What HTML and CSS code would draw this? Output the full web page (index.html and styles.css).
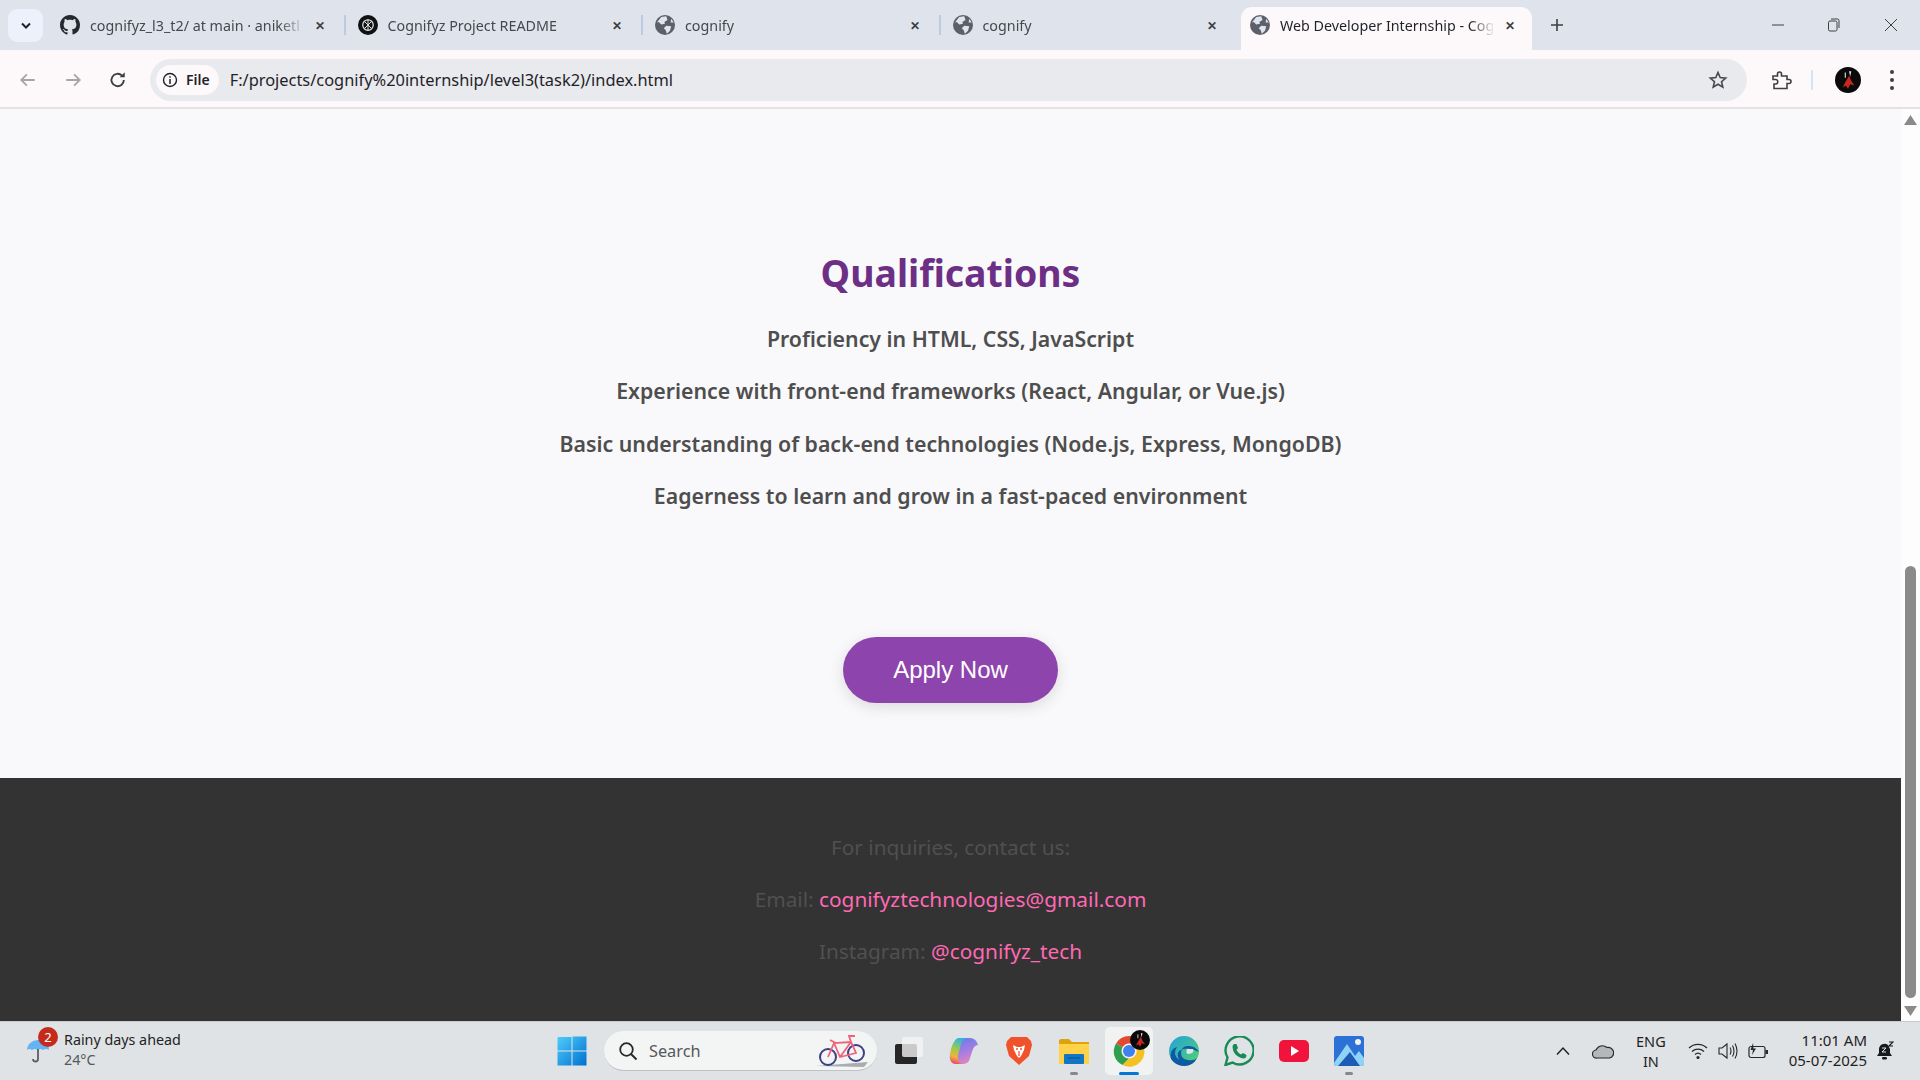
FILE: index.html
```html
<!DOCTYPE html>
<html>
<head>
  <title>Web Developer Internship - Cognifyz</title>
  <link rel="stylesheet" href="styles.css">
</head>
<body>
  <svg class="defs" width="0" height="0">
    <symbol id="globe" viewBox="0 0 16 16">
      <circle cx="8" cy="8" r="8" fill="#5c6068"/>
      <path d="M5 1.5 L9 1 L10 4 L7.5 5.5 L8 7 L5 7.5 L3 5.5 L1.5 6 Z M9 8.5 L13 9 L12 12.5 L9.5 15 L8.5 12 L7 10.5 Z M13 3 L15 6 L12.5 6 Z" fill="#e0e4ee"/>
    </symbol>
    <symbol id="avatar" viewBox="0 0 24 24">
      <circle cx="12" cy="12" r="12" fill="#0a0a0a"/>
      <path d="M9 15 L13 8 L15 13 L18 17 L14 16 L12 20 L10 17 L7 19 Z" fill="#c8281e"/>
      <path d="M9 5 L10 5 L10 10 L9 10 Z M13 4 L15 4 L14 9 Z" fill="#e8e8e8"/>
    </symbol>
  </svg>

  <div class="tabbar">
    <button class="tab-search">
      <svg width="12" height="8" viewBox="0 0 12 8"><path d="M2 1.5 L6 5.5 L10 1.5" fill="none" stroke="#1f2329" stroke-width="2"/></svg>
    </button>

    <div class="tab">
      <svg class="favicon" viewBox="0 0 16 16"><path fill="#24292f" d="M8 0C3.58 0 0 3.58 0 8c0 3.54 2.29 6.53 5.47 7.59.4.07.55-.17.55-.38 0-.19-.01-.82-.01-1.49-2.01.37-2.53-.49-2.69-.94-.09-.23-.48-.94-.82-1.13-.28-.15-.68-.52-.01-.53.63-.01 1.08.58 1.23.82.72 1.21 1.87.87 2.33.66.07-.52.28-.87.51-1.07-1.78-.2-3.64-.89-3.64-3.95 0-.87.31-1.59.82-2.15-.08-.2-.36-1.02.08-2.12 0 0 .67-.21 2.2.82.64-.18 1.32-.27 2-.27s1.36.09 2 .27c1.53-1.04 2.2-.82 2.2-.82.44 1.1.16 1.92.08 2.12.51.56.82 1.27.82 2.15 0 3.07-1.87 3.75-3.65 3.95.29.25.54.73.54 1.48 0 1.07-.01 1.93-.01 2.2 0 .21.15.46.55.38A8.01 8.01 0 0 0 16 8c0-4.42-3.58-8-8-8z"/></svg>
      <span class="tab-title">cognifyz_l3_t2/ at main · aniketl</span>
      <span class="tab-close">&#10005;</span>
    </div>
    <i class="tab-sep"></i>
    <div class="tab">
      <svg class="favicon" viewBox="0 0 16 16"><circle cx="8" cy="8" r="8" fill="#111"/><circle cx="8" cy="8" r="4.2" fill="none" stroke="#ddd" stroke-width="1"/><path d="M5 5 L11 11 M11 5 L5 11 M8 3.5 L8 12.5" stroke="#ddd" stroke-width=".8"/></svg>
      <span class="tab-title">Cognifyz Project README</span>
      <span class="tab-close">&#10005;</span>
    </div>
    <i class="tab-sep"></i>
    <div class="tab">
      <svg class="favicon"><use href="#globe"/></svg>
      <span class="tab-title">cognify</span>
      <span class="tab-close">&#10005;</span>
    </div>
    <i class="tab-sep"></i>
    <div class="tab">
      <svg class="favicon"><use href="#globe"/></svg>
      <span class="tab-title">cognify</span>
      <span class="tab-close">&#10005;</span>
    </div>
    <div class="tab tab-active">
      <svg class="favicon"><use href="#globe"/></svg>
      <span class="tab-title">Web Developer Internship - Cog</span>
      <span class="tab-close">&#10005;</span>
    </div>
    <svg class="new-tab" width="16" height="16" viewBox="0 0 16 16"><path d="M8 2 V14 M2 8 H14" stroke="#3c4043" stroke-width="1.6"/></svg>

    <div class="win-controls">
      <svg width="12" height="12" viewBox="0 0 12 12"><path d="M0 6 H12" stroke="#3c4043" stroke-width="1"/></svg>
      <svg width="12" height="14" viewBox="0 0 12 14"><rect x=".5" y="3" width="8.5" height="10" rx="1.5" fill="none" stroke="#3c4043"/><path d="M3 1 H9.5 Q11 1 11 2.5 V10" fill="none" stroke="#3c4043"/></svg>
      <svg width="14" height="14" viewBox="0 0 14 14"><path d="M1 1 L13 13 M13 1 L1 13" stroke="#3c4043" stroke-width="1"/></svg>
    </div>
  </div>

  <div class="toolbar">
    <svg class="nav-icon" viewBox="0 0 16 16"><path d="M14 8 H2 M7 3 L2 8 L7 13" fill="none" stroke="#a4a6aa" stroke-width="1.6"/></svg>
    <svg class="nav-icon" viewBox="0 0 16 16"><path d="M2 8 H14 M9 3 L14 8 L9 13" fill="none" stroke="#a4a6aa" stroke-width="1.6"/></svg>
    <svg class="nav-icon" viewBox="0 0 16 16"><path d="M13.2 8 A5.5 5.5 0 1 1 11.6 4.1" fill="none" stroke="#3c4043" stroke-width="1.7"/><path d="M9.5 5.5 H14 V1 Z" fill="#3c4043"/></svg>

    <div class="omnibox">
      <div class="chip">
        <svg width="16" height="16" viewBox="0 0 16 16"><circle cx="8" cy="8" r="6.5" fill="none" stroke="#1f2329" stroke-width="1.4"/><path d="M8 7 V12 M8 4.2 V5.8" stroke="#1f2329" stroke-width="1.5"/></svg>
        <span>File</span>
      </div>
      <span class="url">F:/projects/cognify%20internship/level3(task2)/index.html</span>
      <svg class="star" width="20" height="20" viewBox="0 0 20 20"><path d="M10 2.5 L12.2 7.6 L17.7 8.1 L13.5 11.7 L14.8 17.1 L10 14.2 L5.2 17.1 L6.5 11.7 L2.3 8.1 L7.8 7.6 Z" fill="none" stroke="#45484d" stroke-width="1.6"/></svg>
    </div>

    <svg class="ext" width="22" height="22" viewBox="0 0 22 22"><path d="M3 7 H7.5 V5 A2 2 0 0 1 11.5 5 V7 H17 V10.5 H19 A2 2 0 0 1 19 14.5 H17 V19.5 H4 V15 H6 A2.3 2.3 0 0 0 6 10.5 H3 Z" fill="none" stroke="#3c4043" stroke-width="1.6"/></svg>
    <i class="toolbar-sep"></i>
    <svg class="profile" width="26" height="26"><use href="#avatar"/></svg>
    <div class="menu-dots"><i></i><i></i><i></i></div>
  </div>

  <div class="viewport">
    <div class="page">
      <main class="content">
        <section class="qualifications">
          <h2>Qualifications</h2>
          <p>Proficiency in HTML, CSS, JavaScript</p>
          <p>Experience with front-end frameworks (React, Angular, or Vue.js)</p>
          <p>Basic understanding of back-end technologies (Node.js, Express, MongoDB)</p>
          <p>Eagerness to learn and grow in a fast-paced environment</p>
        </section>
        <a class="apply-btn" href="#">Apply Now</a>
      </main>
      <footer class="contact">
        <p>For inquiries, contact us:</p>
        <p>Email: <a href="#">cognifyztechnologies@gmail.com</a></p>
        <p>Instagram: <a href="#">@cognifyz_tech</a></p>
      </footer>
    </div>
    <div class="scrollbar">
      <svg width="13" height="10" viewBox="0 0 13 10"><path d="M6.5 0 L13 10 H0 Z" fill="#8a8a8a"/></svg>
      <div class="scroll-track"><div class="scroll-thumb"></div></div>
      <svg width="13" height="10" viewBox="0 0 13 10"><path d="M0 0 H13 L6.5 10 Z" fill="#8a8a8a"/></svg>
    </div>
  </div>

  <div class="taskbar">
    <div class="weather">
      <div class="weather-icon">
        <svg width="24" height="28" viewBox="0 0 24 28"><path d="M1 15 A11 10 0 0 1 23 15 Q20 13 17 15 Q14 13 12 15 Q9 13 6 15 Q3 13 1 15 Z" fill="#62b4f3"/><path d="M12 14 V24 A2.5 2.5 0 0 1 7 24" fill="none" stroke="#5a5f63" stroke-width="1.8"/></svg>
        <span class="weather-badge">2</span>
      </div>
      <div class="weather-text">
        <span>Rainy days ahead</span>
        <span class="muted">24°C</span>
      </div>
    </div>

    <div class="task-center">
      <svg class="win-logo" width="30" height="30" viewBox="0 0 30 30">
        <defs><linearGradient id="winGrad" x1="0" y1="0" x2="1" y2="1"><stop offset="0" stop-color="#4fcdfb"/><stop offset="1" stop-color="#0070d0"/></linearGradient></defs>
        <path d="M1 1 H14.5 V14.5 H0.5 V2 Z M15.5 .5 H29.5 V14.5 H15.5 Z M.5 15.5 H14.5 V29.5 H.5 Z M15.5 15.5 H29.5 V29.5 H15.5 Z" fill="url(#winGrad)"/>
      </svg>

      <div class="search-box">
        <svg width="20" height="20" viewBox="0 0 20 20"><circle cx="8.5" cy="8.5" r="6.3" fill="none" stroke="#26292c" stroke-width="1.8"/><path d="M13 13 L18.5 18.5" stroke="#26292c" stroke-width="2"/></svg>
        <span>Search</span>
        <svg class="bike" width="54" height="32" viewBox="0 0 54 32">
          <path d="M0 31 L52 27 L48 32 Z" fill="#a9adb0"/>
          <circle cx="12" cy="22" r="8" fill="#f2f5f5" stroke="#3f3f85" stroke-width="2"/>
          <circle cx="40" cy="18" r="8" fill="#f2f5f5" stroke="#3f3f85" stroke-width="2"/>
          <path d="M12 22 L18 8 L35 7 L40 18 L24 22 L18 8 M24 22 L35 7 M14 5 L20 8 M35 7 L33 1 L39 1" fill="none" stroke="#f0627a" stroke-width="1.8"/>
        </svg>
      </div>

      <div class="task-icon">
        <svg width="30" height="30" viewBox="0 0 30 30"><rect x="1" y="8" width="22" height="20" rx="2" fill="#262626"/><rect x="8" y="1" width="21" height="20" rx="2" fill="#f4f4f4" fill-opacity=".8"/></svg>
      </div>
      <div class="task-icon">
        <svg width="30" height="30" viewBox="0 0 30 30">
          <defs>
            <linearGradient id="copilotLeft" x1="0.6" y1="0" x2="0.4" y2="1"><stop offset="0" stop-color="#2ab4e8"/><stop offset=".45" stop-color="#9ccc4c"/><stop offset=".75" stop-color="#f2b23c"/><stop offset="1" stop-color="#e4506a"/></linearGradient>
            <linearGradient id="copilotRight" x1="0.3" y1="0" x2="0.7" y2="1"><stop offset="0" stop-color="#5f7fe8"/><stop offset=".6" stop-color="#b07de0"/><stop offset="1" stop-color="#e88ab0"/></linearGradient>
          </defs>
          <path d="M21 2 H14 Q10 2 9 6 L6 15 Q5 18 2 18 H1 Q0 22 2 25 Q4 28 7 28 H15 Q18 28 20 25 L24 13 Q26 9 29 9 Q27 2 21 2 Z" fill="url(#copilotRight)"/>
          <path d="M10 2 H17 Q13 3 12 8 L9 19 Q8 26 13 28 H6 Q1 27 1 21 Q1 12 5 6 Q7 2 10 2 Z" fill="url(#copilotLeft)"/>
        </svg>
      </div>
      <div class="task-icon">
        <svg width="28" height="30" viewBox="0 0 28 30"><path d="M6 1 H22 L26 5 L27 9 L24 20 L14 29 L4 20 L1 9 L2 5 Z" fill="#f0532b"/><path d="M8 9 L12 11 H16 L20 9 L19 14 L16 20 L14 22 L12 20 L9 14 Z" fill="#fff"/><path d="M11 13 H13 M15 13 H17 M14 15 V20" stroke="#f0532b" stroke-width="1.3"/></svg>
      </div>
      <div class="task-icon running">
        <svg width="30" height="26" viewBox="0 0 30 26"><path d="M0 3 Q0 1 2 1 H10 L13 4 H30 V26 H0 Z" fill="#dba40f"/><rect y="6" width="30" height="20" fill="#ffd24a"/><rect x="5" y="16" width="20" height="10" rx="1" fill="#1276c4"/><path d="M9 20 H21" stroke="#0a4f8a" stroke-width="1"/></svg>
      </div>
      <div class="task-icon active">
        <svg class="chrome" width="32" height="32" viewBox="0 0 32 32">
          <path d="M16 1 A15 15 0 0 1 29 8.5 H16 A7.5 7.5 0 0 0 9.5 12.3 L3 8.5 A15 15 0 0 1 16 1 Z" fill="#e2492f"/>
          <path d="M3 8.5 L9.5 12.3 A7.5 7.5 0 0 0 16 23.5 L9.5 30 A15 15 0 0 1 3 8.5 Z" fill="#2f9e4e"/>
          <path d="M29 8.5 A15 15 0 0 1 9.5 30 L16 23.5 A7.5 7.5 0 0 0 22.5 12 Z" fill="#f4c022"/>
          <circle cx="16" cy="16" r="6" fill="#3f82ee"/>
        </svg>
        <svg class="chrome-badge" width="20" height="20"><use href="#avatar"/></svg>
      </div>
      <div class="task-icon">
        <svg width="30" height="30" viewBox="0 0 30 30">
          <defs><linearGradient id="edgeGrad" x1="0" y1="0" x2="1" y2="1"><stop offset="0" stop-color="#22a0dc"/><stop offset="1" stop-color="#55d46c"/></linearGradient></defs>
          <circle cx="15" cy="15" r="15" fill="url(#edgeGrad)"/>
          <path d="M30 16 Q26 9 18 10 Q12 11 12 17 Q12 23 19 24 Q25 25 28 22 Q24 30 15 30 Q7 30 2 23 Q0 13 8 11 Q3 18 10 24 Q6 15 14 13 Q22 11 30 16 Z" fill="#0c59a4"/>
          <path d="M18 13 H24 Q26 17 20 18 Q16 18 18 13 Z" fill="#e2e5e5"/>
        </svg>
      </div>
      <div class="task-icon">
        <svg width="30" height="30" viewBox="0 0 30 30"><path d="M1.5 29 L3.5 21.5 A14 14 0 1 1 8.5 26.5 Z" fill="none" stroke="#178a55" stroke-width="2.4"/><path d="M10 8 L12.5 8 L14 12 L12.5 14 Q14.5 17.5 17 18.5 L19 17 L22.5 19 L22 21.5 Q20 23 17 22 Q9 19 8.5 11 Q8.5 9 10 8 Z" fill="#178a55"/></svg>
      </div>
      <div class="task-icon">
        <svg width="30" height="22" viewBox="0 0 30 22"><rect width="30" height="22" rx="5" fill="#f0143c"/><path d="M12 6 L20 11 L12 16 Z" fill="#fff"/></svg>
      </div>
      <div class="task-icon running">
        <svg width="30" height="30" viewBox="0 0 30 30">
          <rect width="30" height="30" rx="3" fill="#2b71d6"/>
          <path d="M0 27 L13 8 L21 20 L25 15 L30 22 V27 Q30 30 27 30 H3 Q0 30 0 27 Z" fill="#8fd3f7"/>
          <path d="M4 30 L16 16 L26 30 Z" fill="#1e5bb5"/>
          <circle cx="24" cy="6" r="3" fill="#f2f2f2"/>
        </svg>
      </div>
    </div>

    <div class="tray">
      <svg width="16" height="10" viewBox="0 0 16 10"><path d="M2 8.5 L8 2 L14 8.5" fill="none" stroke="#1f2224" stroke-width="1.5"/></svg>
      <svg class="cloud" width="22" height="16" viewBox="0 0 22 16"><path d="M5 15 A4 4 0 0 1 4 7 A7 7 0 0 1 15 4.5 A5 5 0 0 1 17.5 15 Z" fill="#b5b8ba" stroke="#26292b" stroke-width="1.2"/></svg>
      <div class="lang"><span>ENG</span><span>IN</span></div>
      <div class="tray-group">
        <svg width="20" height="18" viewBox="0 0 20 18"><path d="M1 6 A13 13 0 0 1 19 6 M4 9.5 A9 9 0 0 1 16 9.5 M7 12.5 A4.5 4.5 0 0 1 13 12.5" fill="none" stroke="#26292b" stroke-width="1.3"/><circle cx="10" cy="15.5" r="1.6" fill="#26292b"/></svg>
        <svg width="20" height="18" viewBox="0 0 20 18"><path d="M1 6 H4 L9 2 V16 L4 12 H1 Z" fill="none" stroke="#26292b" stroke-width="1.1"/><path d="M12 5.5 Q14 9 12 12.5 M14.5 3.5 Q17.5 9 14.5 14.5 M17 1.5 Q21 9 17 16.5" fill="none" stroke="#26292b" stroke-width="1.1"/></svg>
        <svg width="21" height="16" viewBox="0 0 21 16"><rect x="1" y="3.5" width="16" height="11" rx="2" fill="none" stroke="#26292b" stroke-width="1.2"/><rect x="17.5" y="7" width="2.5" height="4" fill="#26292b"/><path d="M5 0 L2.5 7 H5 L4 12 L8 5.5 H5.5 Z" fill="#26292b"/></svg>
      </div>
      <div class="clock"><span>11:01 AM</span><span>05-07-2025</span></div>
      <svg class="bell" width="18" height="20" viewBox="0 0 18 20"><path d="M1 15 L3 12 V8 A5.5 5.5 0 0 1 12 4 L14 8 V12 L16 15 Z" fill="#17191b"/><rect x="6" y="16" width="5" height="2.5" rx="1.2" fill="#17191b"/><path d="M6 7 H10 L6 11 H10" fill="none" stroke="#dfe3e5" stroke-width="1"/><path d="M13 1 H17 L13 5 H17" fill="none" stroke="#17191b" stroke-width="1.1"/></svg>
    </div>
  </div>
</body>
</html>
```

FILE: styles.css
```css
* {
  box-sizing: border-box;
}
html, body {
  height: 100%;
}
body {
  margin: 0;
  display: flex;
  flex-direction: column;
  overflow: hidden;
  font-family: "Noto Sans", "Open Sans", sans-serif;
  background-color: #f9f9fb;
}
.defs {
  position: absolute;
}
i {
  display: block;
}

/* Browser tabs */
.tabbar {
  height: 50px;
  flex: none;
  display: flex;
  align-items: flex-end;
  padding-left: 8px;
  background-color: #dfe3ec;
}
.tab-search {
  width: 35px;
  height: 33px;
  margin: 0 7px 8px 0;
  padding: 0;
  border: none;
  border-radius: 9px;
  background-color: #edf1fb;
  display: flex;
  align-items: center;
  justify-content: center;
}
.tab {
  width: 301.5px;
  height: 50px;
  display: flex;
  align-items: center;
  gap: 10px;
  padding: 0 27px 0 10px;
  flex: none;
}
.tab-active {
  width: 291px;
  height: 43px;
  margin-left: -3px;
  padding: 0 17px 7px 9px;
  border-radius: 11px 11px 0 0;
  background-color: #fdf8f9;
}
.favicon {
  width: 20px;
  height: 20px;
  flex: none;
}
.tab-title {
  flex: 1;
  overflow: hidden;
  white-space: nowrap;
  font-size: 14.3px;
  color: #45484e;
  -webkit-mask-image: linear-gradient(to right, #000 88%, transparent);
  mask-image: linear-gradient(to right, #000 88%, transparent);
}
.tab-active .tab-title {
  color: #1f2329;
}
.tab-close {
  font-size: 12px;
  font-weight: 700;
  color: #3c4043;
  flex: none;
}
.tab-sep {
  width: 2px;
  height: 20px;
  margin: 0 2px 15px -8px;
  background-color: #bccbe3;
  flex: none;
}
.new-tab {
  margin: 0 0 17px 17px;
  flex: none;
}
.win-controls {
  margin-left: auto;
  align-self: center;
  display: flex;
  align-items: center;
  gap: 44px;
  padding-right: 22px;
}

/* Toolbar with address field */
.toolbar {
  height: 59px;
  flex: none;
  display: flex;
  align-items: center;
  padding: 2px 13px 0 19px;
  background-color: #fdf8f9;
  border-bottom: 2px solid #e6e2e3;
}
.nav-icon {
  width: 18px;
  height: 18px;
  margin-right: 27px;
  flex: none;
}
.nav-icon:nth-child(3) {
  margin-right: 0;
}
.omnibox {
  width: 1597px;
  height: 42px;
  margin-left: 23px;
  flex: none;
  display: flex;
  align-items: center;
  padding: 0 6px;
  border-radius: 21px;
  background-color: #e9eaee;
}
.chip {
  height: 30px;
  display: flex;
  align-items: center;
  gap: 8px;
  padding: 0 9px 0 6px;
  border-radius: 15px;
  background-color: #fdf8f9;
  font-size: 14px;
  font-weight: 600;
  color: #1f2329;
}
.url {
  margin-left: 11px;
  font-size: 16.4px;
  color: #1f2329;
}
.star {
  margin: 0 13px 0 auto;
}
.ext {
  margin-left: 23px;
  flex: none;
}
.toolbar-sep {
  width: 2px;
  height: 20px;
  margin: 0 22px 0 19px;
  background-color: #d6e2f8;
  flex: none;
}
.profile {
  flex: none;
}
.menu-dots {
  margin-left: 29px;
  display: flex;
  flex-direction: column;
  gap: 4px;
}
.menu-dots i {
  width: 4px;
  height: 4px;
  border-radius: 50%;
  background-color: #3c4043;
}

/* Page */
.viewport {
  flex: 1;
  min-height: 0;
  display: flex;
}
.page {
  flex: 1;
  display: flex;
  flex-direction: column;
}
.content {
  flex: 1;
  text-align: center;
  padding-top: 137px;
  background-color: #f9f9fb;
}
.qualifications h2 {
  margin: 0 0 21px;
  font-size: 37.4px;
  line-height: 54px;
  font-weight: 700;
  color: #6c2f85;
}
.qualifications p {
  margin: 0 0 16px;
  font-size: 21.3px;
  line-height: 36.3px;
  font-weight: 600;
  color: #4e4e4e;
}
.apply-btn {
  display: inline-block;
  margin-top: 107px;
  padding: 19px 50px;
  border-radius: 33px;
  background-color: #8e44ad;
  color: #fff;
  text-decoration: none;
  font-family: "Liberation Sans", Arial, sans-serif;
  font-size: 24px;
  line-height: 28px;
  box-shadow: 0 4px 15px rgba(0, 0, 0, 0.12);
}
.contact {
  height: 243px;
  flex: none;
  padding-top: 51px;
  text-align: center;
  background-color: #333;
  color: #505050;
}
.contact p {
  margin: 0 0 16px;
  font-size: 20.8px;
  line-height: 36px;
}
.contact a {
  color: #ff69b4;
  text-decoration: none;
}
.scrollbar {
  width: 19px;
  flex: none;
  display: flex;
  flex-direction: column;
  align-items: flex-end;
  padding: 6px 3px 5px 0;
  background-color: #fdfdfe;
}
.scroll-track {
  flex: 1;
  width: 100%;
}
.scroll-thumb {
  width: 11px;
  height: 432px;
  margin: 441px 1px 0 auto;
  border-radius: 6px;
  background-color: #8a8a8a;
}

/* Windows taskbar */
.taskbar {
  height: 59px;
  flex: none;
  position: relative;
  display: flex;
  align-items: center;
  justify-content: space-between;
  padding: 0 26px 0 24px;
  background-color: #dfe3e5;
  border-top: 1px solid #c8cbcd;
  color: #1f2224;
}
.weather {
  display: flex;
  align-items: center;
  gap: 5px;
  margin-top: -2px;
}
.weather-icon {
  position: relative;
  width: 35px;
  height: 36px;
  padding: 3px 0 0 2px;
}
.weather-badge {
  position: absolute;
  top: -5px;
  left: 14px;
  width: 20px;
  height: 20px;
  border-radius: 50%;
  background-color: #c42b1c;
  color: #fff;
  font-size: 13px;
  line-height: 20px;
  text-align: center;
}
.weather-text {
  display: flex;
  flex-direction: column;
  font-size: 14.3px;
  line-height: 20px;
}
.muted {
  color: #55585b;
}
.task-center {
  position: absolute;
  left: 557px;
  top: 0;
  height: 58px;
  display: flex;
  align-items: center;
}
.win-logo {
  flex: none;
  margin-right: 17px;
}
.search-box {
  width: 273px;
  height: 40px;
  margin-right: 8px;
  display: flex;
  align-items: center;
  gap: 11px;
  padding: 0 0 0 14px;
  border-radius: 20px;
  border-bottom: 1px solid #c0c3c5;
  background-color: #f3f5f5;
  font-size: 16.3px;
  color: #55585b;
}
.bike {
  margin-left: auto;
  margin-right: 7px;
}
.task-icon {
  position: relative;
  width: 48px;
  height: 48px;
  margin-right: 7px;
  flex: none;
  display: flex;
  align-items: center;
  justify-content: center;
  border-radius: 5px;
}
.task-icon.active {
  background-color: #f1f3f3;
}
.task-icon.running::after,
.task-icon.active::after {
  content: "";
  position: absolute;
  bottom: 0;
  left: 50%;
  width: 8px;
  height: 3px;
  margin-left: -4px;
  border-radius: 2px;
  background-color: #85898c;
}
.task-icon.active::after {
  width: 20px;
  margin-left: -10px;
  background-color: #0078d4;
}
.chrome-badge {
  position: absolute;
  top: 3px;
  right: 3px;
}
.tray {
  display: flex;
  align-items: center;
  margin-left: auto;
}
.cloud {
  margin-left: 21px;
}
.lang {
  display: flex;
  flex-direction: column;
  align-items: center;
  margin: 0 22px;
  font-size: 14.5px;
  line-height: 20px;
}
.tray-group {
  display: flex;
  align-items: center;
  gap: 10px;
}
.clock {
  display: flex;
  flex-direction: column;
  align-items: flex-end;
  margin: -2px 9px 0 20px;
  font-size: 15px;
  line-height: 20px;
}
```
